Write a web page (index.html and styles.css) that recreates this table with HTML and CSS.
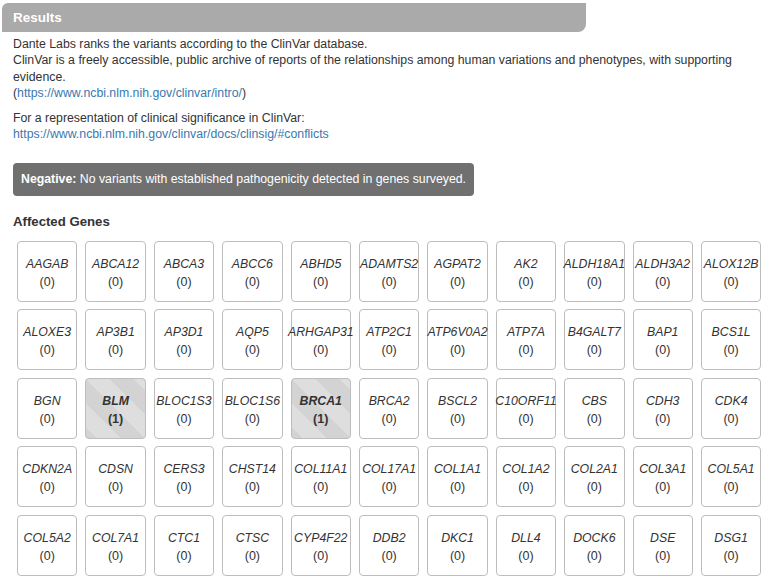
FILE: index.html
```html
<!DOCTYPE html>
<html>
<head>
<meta charset="utf-8">
<link rel="stylesheet" href="styles.css">
</head>
<body>
<div class="heading">Results</div>
<div class="content">
  <p class="p1">Dante Labs ranks the variants according to the ClinVar database.<br>ClinVar is a freely accessible, public archive of reports of the relationships among human variations and phenotypes, with supporting evidence.<br>(<a href="#">https://www.ncbi.nlm.nih.gov/clinvar/intro/</a>)</p>
  <p class="p2">For a representation of clinical significance in ClinVar:<br><a href="#">https://www.ncbi.nlm.nih.gov/clinvar/docs/clinsig/#conflicts</a></p>
  <div class="alert"><b>Negative:</b> No variants with established pathogenicity detected in genes surveyed.</div>
  <h3 class="genes-title">Affected Genes</h3>
  <div class="grid">
    <div class="tile"><span class="name">AAGAB</span><span class="count">(0)</span></div>
    <div class="tile"><span class="name">ABCA12</span><span class="count">(0)</span></div>
    <div class="tile"><span class="name">ABCA3</span><span class="count">(0)</span></div>
    <div class="tile"><span class="name">ABCC6</span><span class="count">(0)</span></div>
    <div class="tile"><span class="name">ABHD5</span><span class="count">(0)</span></div>
    <div class="tile"><span class="name">ADAMTS2</span><span class="count">(0)</span></div>
    <div class="tile"><span class="name">AGPAT2</span><span class="count">(0)</span></div>
    <div class="tile"><span class="name">AK2</span><span class="count">(0)</span></div>
    <div class="tile"><span class="name">ALDH18A1</span><span class="count">(0)</span></div>
    <div class="tile"><span class="name">ALDH3A2</span><span class="count">(0)</span></div>
    <div class="tile"><span class="name">ALOX12B</span><span class="count">(0)</span></div>

    <div class="tile"><span class="name">ALOXE3</span><span class="count">(0)</span></div>
    <div class="tile"><span class="name">AP3B1</span><span class="count">(0)</span></div>
    <div class="tile"><span class="name">AP3D1</span><span class="count">(0)</span></div>
    <div class="tile"><span class="name">AQP5</span><span class="count">(0)</span></div>
    <div class="tile"><span class="name">ARHGAP31</span><span class="count">(0)</span></div>
    <div class="tile"><span class="name">ATP2C1</span><span class="count">(0)</span></div>
    <div class="tile"><span class="name">ATP6V0A2</span><span class="count">(0)</span></div>
    <div class="tile"><span class="name">ATP7A</span><span class="count">(0)</span></div>
    <div class="tile"><span class="name">B4GALT7</span><span class="count">(0)</span></div>
    <div class="tile"><span class="name">BAP1</span><span class="count">(0)</span></div>
    <div class="tile"><span class="name">BCS1L</span><span class="count">(0)</span></div>

    <div class="tile"><span class="name">BGN</span><span class="count">(0)</span></div>
    <div class="tile hit"><span class="name">BLM</span><span class="count">(1)</span></div>
    <div class="tile"><span class="name">BLOC1S3</span><span class="count">(0)</span></div>
    <div class="tile"><span class="name">BLOC1S6</span><span class="count">(0)</span></div>
    <div class="tile hit"><span class="name">BRCA1</span><span class="count">(1)</span></div>
    <div class="tile"><span class="name">BRCA2</span><span class="count">(0)</span></div>
    <div class="tile"><span class="name">BSCL2</span><span class="count">(0)</span></div>
    <div class="tile"><span class="name">C10ORF11</span><span class="count">(0)</span></div>
    <div class="tile"><span class="name">CBS</span><span class="count">(0)</span></div>
    <div class="tile"><span class="name">CDH3</span><span class="count">(0)</span></div>
    <div class="tile"><span class="name">CDK4</span><span class="count">(0)</span></div>

    <div class="tile"><span class="name">CDKN2A</span><span class="count">(0)</span></div>
    <div class="tile"><span class="name">CDSN</span><span class="count">(0)</span></div>
    <div class="tile"><span class="name">CERS3</span><span class="count">(0)</span></div>
    <div class="tile"><span class="name">CHST14</span><span class="count">(0)</span></div>
    <div class="tile"><span class="name">COL11A1</span><span class="count">(0)</span></div>
    <div class="tile"><span class="name">COL17A1</span><span class="count">(0)</span></div>
    <div class="tile"><span class="name">COL1A1</span><span class="count">(0)</span></div>
    <div class="tile"><span class="name">COL1A2</span><span class="count">(0)</span></div>
    <div class="tile"><span class="name">COL2A1</span><span class="count">(0)</span></div>
    <div class="tile"><span class="name">COL3A1</span><span class="count">(0)</span></div>
    <div class="tile"><span class="name">COL5A1</span><span class="count">(0)</span></div>

    <div class="tile"><span class="name">COL5A2</span><span class="count">(0)</span></div>
    <div class="tile"><span class="name">COL7A1</span><span class="count">(0)</span></div>
    <div class="tile"><span class="name">CTC1</span><span class="count">(0)</span></div>
    <div class="tile"><span class="name">CTSC</span><span class="count">(0)</span></div>
    <div class="tile"><span class="name">CYP4F22</span><span class="count">(0)</span></div>
    <div class="tile"><span class="name">DDB2</span><span class="count">(0)</span></div>
    <div class="tile"><span class="name">DKC1</span><span class="count">(0)</span></div>
    <div class="tile"><span class="name">DLL4</span><span class="count">(0)</span></div>
    <div class="tile"><span class="name">DOCK6</span><span class="count">(0)</span></div>
    <div class="tile"><span class="name">DSE</span><span class="count">(0)</span></div>
    <div class="tile"><span class="name">DSG1</span><span class="count">(0)</span></div>
  </div>
</div>
</body>
</html>
```
FILE: styles.css
```css
html, body {
  margin: 0;
  padding: 0;
  background: #fff;
}
body {
  font-family: "Liberation Sans", Arial, sans-serif;
  font-size: 12.3px;
  color: #333;
  overflow: hidden;
}
.heading {
  margin: 3px 0 0 2px;
  width: 573px;
  height: 29px;
  line-height: 29px;
  padding-left: 11px;
  background: #aaaaaa;
  color: #fff;
  font-weight: bold;
  font-size: 13.5px;
  border-radius: 6px 0 8px 0;
}
.content {
  padding: 0 13px;
}
.p1, .p2 {
  margin: 0;
  line-height: 16.3px;
}
.p1 {
  margin-top: 4px;
}
.p2 {
  margin-top: 9px;
}
a {
  color: #3a78b0;
  text-decoration: none;
}
.alert {
  margin-top: 20px;
  height: 33px;
  line-height: 33px;
  padding-left: 8px;
  background: #707070;
  color: #fff;
  border-radius: 4px;
  font-size: 12.3px;
  box-sizing: border-box;
  width: 461px;
}
.genes-title {
  margin: 17px 0 0 0;
  font-size: 13.2px;
  line-height: 18px;
  font-weight: bold;
  color: #333;
}
.grid {
  margin: 10px 0 0 4px;
  display: grid;
  grid-template-columns: repeat(11, 60.4px);
  grid-auto-rows: 61px;
  column-gap: 8px;
  row-gap: 7.5px;
}
.tile {
  box-sizing: border-box;
  border: 1px solid #bdbdbd;
  border-radius: 4px;
  display: flex;
  flex-direction: column;
  align-items: center;
  padding-top: 13px;
  white-space: nowrap;
  color: #333;
}
.name {
  font-style: italic;
  font-size: 12.3px;
  line-height: 18px;
}
.count {
  font-size: 12.5px;
  line-height: 18px;
}
.hit {
  background-color: #d3d3d3;
  background-image: linear-gradient(45deg, rgba(255,255,255,.25) 25%, transparent 25%, transparent 50%, rgba(255,255,255,.25) 50%, rgba(255,255,255,.25) 75%, transparent 75%, transparent);
  background-size: 48px 48px;
}
.hit .name, .hit .count {
  font-weight: bold;
}
```
